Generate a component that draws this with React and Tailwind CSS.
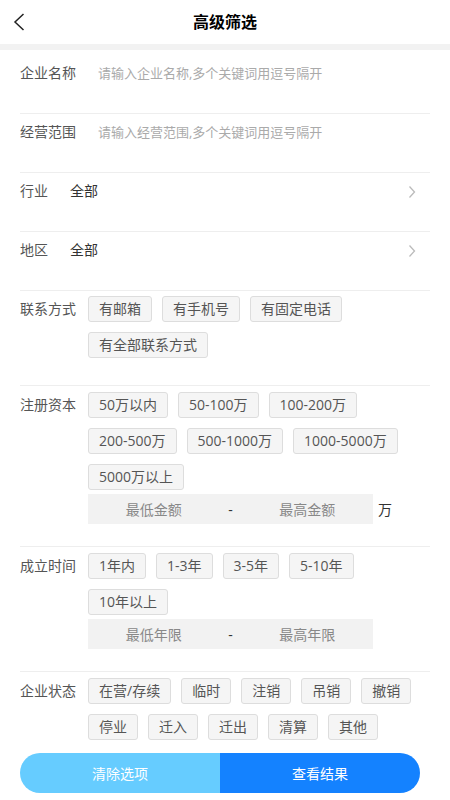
import React from "react";

function ChevronRight() {
  return (
    <svg width="8" height="14" viewBox="0 0 8 14" className="shrink-0">
      <polyline points="1.5,1.5 6.5,7 1.5,12.5" fill="none" stroke="#bbbbbb" strokeWidth="1.3" />
    </svg>
  );
}

function Tag({ children }) {
  return (
    <div className="h-[26px] px-[10px] inline-flex items-center border border-[#dddddd] bg-[#f5f5f5] rounded-[3px] text-[14px] leading-[24px] text-[#555555] whitespace-nowrap">
      {children}
    </div>
  );
}

function Range({ left, right, unit }) {
  return (
    <div className="flex items-center mt-[4px]">
      <div className="w-[285px] h-[30px] bg-[#f2f2f2] flex items-center text-[14px]">
        <div className="flex-1 text-center text-[#888888]">{left}</div>
        <div className="w-[22px] text-center text-[#333333]">-</div>
        <div className="flex-1 text-center text-[#888888]">{right}</div>
      </div>
      {unit && <div className="ml-[5px] text-[14px] text-[#333333]">{unit}</div>}
    </div>
  );
}

function Section({ label, tags, range, pt = "pt-[6px]", pb = "pb-[22px]" }) {
  return (
    <div className={`flex border-t border-[#eeeeee] ${pt} ${pb}`}>
      <div className="w-[68px] shrink-0 text-[14px] leading-[26px] text-[#555555]">{label}</div>
      <div className="flex-1 min-w-0">
        <div className="flex flex-wrap gap-[10px]">
          {tags.map((t) => (
            <Tag key={t}>{t}</Tag>
          ))}
        </div>
        {range}
      </div>
    </div>
  );
}

export default function App() {
  return (
    <div className="w-[450px] min-h-[800px] bg-white font-['Open_Sans','Noto_Sans_CJK_SC',sans-serif]">
      <div className="h-[44px] grid grid-cols-[44px_1fr_44px] items-center">
        <div className="flex items-center pl-[13px]">
          <svg width="12" height="18" viewBox="0 0 12 18">
            <polyline points="10.5,1 2,9 10.5,17" fill="none" stroke="#222222" strokeWidth="1.5" />
          </svg>
        </div>
        <div className="text-center text-[16px] font-bold text-black leading-[20px]">高级筛选</div>
        <div />
      </div>
      <div className="h-[6px] bg-[#f2f2f2]" />

      <div className="px-[20px]">
        <div className="h-[63px] pt-[13px] flex text-[14px] leading-[20px]">
          <div className="w-[78px] shrink-0 text-[#555555]">企业名称</div>
          <div className="text-[13px] text-[#aaaaaa]">请输入企业名称,多个关键词用逗号隔开</div>
        </div>
        <div className="h-[59px] pt-[8px] flex border-t border-[#eeeeee] text-[14px] leading-[20px]">
          <div className="w-[78px] shrink-0 text-[#555555]">经营范围</div>
          <div className="text-[13px] text-[#aaaaaa]">请输入经营范围,多个关键词用逗号隔开</div>
        </div>
        <div className="h-[59px] pt-[8px] flex items-start border-t border-[#eeeeee] text-[14px] leading-[20px]">
          <div className="w-[50px] shrink-0 text-[#555555]">行业</div>
          <div className="flex-1 text-[#333333]">全部</div>
          <div className="pt-[4px] pr-[14px]"><ChevronRight /></div>
        </div>
        <div className="h-[59px] pt-[8px] flex items-start border-t border-[#eeeeee] text-[14px] leading-[20px]">
          <div className="w-[50px] shrink-0 text-[#555555]">地区</div>
          <div className="flex-1 text-[#333333]">全部</div>
          <div className="pt-[4px] pr-[14px]"><ChevronRight /></div>
        </div>

        <Section
          label="联系方式"
          pt="pt-[5px]"
          pb="pb-[27px]"
          tags={["有邮箱", "有手机号", "有固定电话", "有全部联系方式"]}
        />
        <Section
          label="注册资本"
          tags={["50万以内", "50-100万", "100-200万", "200-500万", "500-1000万", "1000-5000万", "5000万以上"]}
          range={<Range left="最低金额" right="最高金额" unit="万" />}
        />
        <Section
          label="成立时间"
          tags={["1年内", "1-3年", "3-5年", "5-10年", "10年以上"]}
          range={<Range left="最低年限" right="最高年限" />}
        />
        <Section
          label="企业状态"
          pb="pb-0"
          tags={["在营/存续", "临时", "注销", "吊销", "撤销", "停业", "迁入", "迁出", "清算", "其他"]}
        />

        <div className="mt-[13px] w-[400px] h-[40px] flex rounded-full overflow-hidden text-[14px] text-white">
          <div className="flex-1 bg-[#66ccff] flex items-center justify-center">清除选项</div>
          <div className="flex-1 bg-[#1482ff] flex items-center justify-center">查看结果</div>
        </div>
      </div>
    </div>
  );
}
